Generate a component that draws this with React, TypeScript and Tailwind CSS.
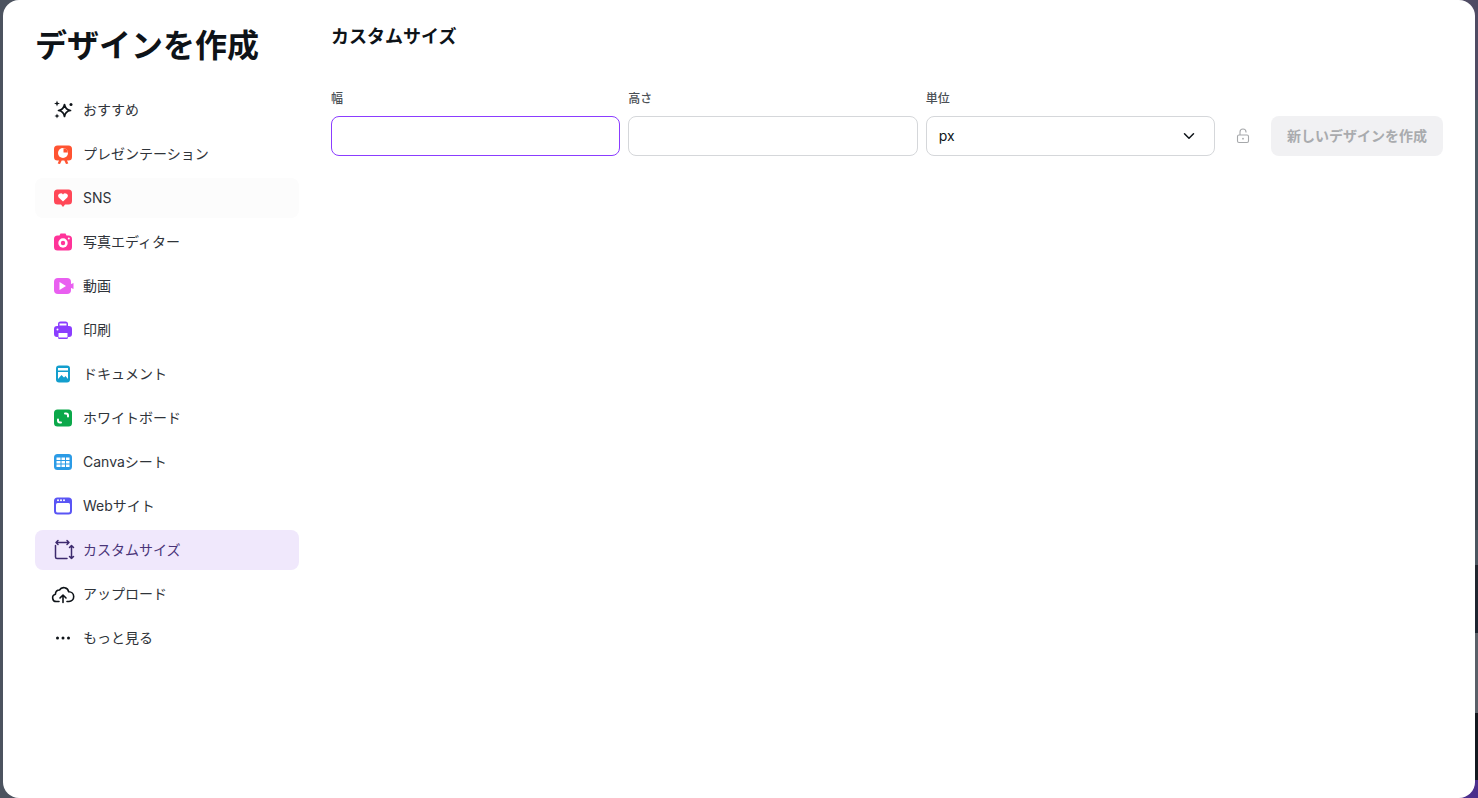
import { ChevronDown } from 'lucide-react'
import type { ReactNode } from 'react'

const Sparkles = () => (
  <svg viewBox="0 0 24 24" className="size-6" fill="#0e1318">
    <path d="M13.500 6.500c.6 3.800 2 5.400 6 6-4 .6-5.400 2.200-6 6-.6-3.800-2-5.400-6-6 4-.6 5.400-2.200 6-6z" fill="none" stroke="#0e1318" strokeWidth="1.700" strokeLinejoin="round" />
    <path d="M6 2.500l.8 2.200 2.200.8-2.200.8L6 8.500l-.8-2.200-2.200-.8 2.200-.8z" />
    <path d="M6 15.500l.7 1.800 1.800.7-1.800.7-.7 1.800-.7-1.800-1.800-.7 1.800-.7z" />
    <circle cx="20" cy="6.500" r="1.500" />
  </svg>
)

const Presentation = () => (
  <svg viewBox="0 0 24 24" className="size-6">
    <path d="M6.500 3.500h11A3.500 3.500 0 0 1 21 7v8a3.500 3.500 0 0 1-3.500 3.500h-1.500l1.300 3-2.300.5-1.700-3.500h-2.600l-1.700 3.500-2.300-.5 1.300-3H6.500A3.500 3.500 0 0 1 3 15V7a3.500 3.500 0 0 1 3.500-3.500z" fill="#ff5331" />
    <circle cx="12" cy="11" r="5" fill="#fff" />
    <path d="M12.500 10.500V6.200a4.500 4.500 0 0 1 4.300 4.300z" fill="#ff5331" />
  </svg>
)

const Social = () => (
  <svg viewBox="0 0 24 24" className="size-6">
    <path d="M6.500 3.500h11A3.500 3.500 0 0 1 21 7v8a3.500 3.500 0 0 1-3.500 3.500h-3.500L12 21l-2-2.500H6.500A3.500 3.500 0 0 1 3 15V7a3.500 3.500 0 0 1 3.500-3.500z" fill="#ff4757" />
    <path d="M12 15.500l-4.300-4a2.600 2.600 0 0 1 4.300-3 2.600 2.600 0 0 1 4.300 3z" fill="#fff" />
  </svg>
)

const Camera = () => (
  <svg viewBox="0 0 24 24" className="size-6">
    <path d="M6.500 5.500h2l1-2h5l1 2h2A3.500 3.500 0 0 1 21 9v8a3.500 3.500 0 0 1-3.500 3.500h-11A3.500 3.500 0 0 1 3 17V9a3.500 3.500 0 0 1 3.500-3.500z" fill="#ff3399" />
    <circle cx="12" cy="13" r="4.700" fill="#fff" />
    <circle cx="12" cy="13" r="2.200" fill="#ff3399" />
    <circle cx="17.800" cy="8.500" r="1" fill="#fff" />
  </svg>
)

const Video = () => (
  <svg viewBox="0 0 24 24" className="size-6">
    <rect x="3" y="4" width="17" height="16" rx="4" fill="#e95ff0" />
    <path d="M19 10.500l3.500-1.500v6l-3.500-1.500z" fill="#e95ff0" />
    <path d="M8.500 8l6.500 4-6.500 4z" fill="#fff" />
  </svg>
)

const Printer = () => (
  <svg viewBox="0 0 24 24" className="size-6">
    <path d="M7 8V6a2.500 2.500 0 0 1 2.500-2.500h5A2.500 2.500 0 0 1 17 6v2h1a3 3 0 0 1 3 3v5a3 3 0 0 1-3 3h-1v.500a1.500 1.500 0 0 1-1.500 1.500h-7A1.500 1.500 0 0 1 7 19.500V19H6a3 3 0 0 1-3-3v-5a3 3 0 0 1 3-3z" fill="#8b3dff" />
    <rect x="8.500" y="5.500" width="7" height="2" fill="#fff" />
    <rect x="7.500" y="15" width="9" height="4.500" rx=".5" fill="#fff" />
    <circle cx="6.500" cy="11.500" r="1" fill="#fff" />
  </svg>
)

const Doc = () => (
  <svg viewBox="0 0 24 24" className="size-6">
    <rect x="5" y="3.500" width="14" height="17" rx="3" fill="#139ecd" />
    <rect x="7" y="6" width="10" height="2.500" fill="#fff" />
    <rect x="7" y="10" width="10" height="7" fill="#fff" />
    <path d="M7 17l3.500-4 2.500 2.500 1.500-1.500 2.500 3z" fill="#139ecd" />
  </svg>
)

const Whiteboard = () => (
  <svg viewBox="0 0 24 24" className="size-6">
    <rect x="3" y="3.500" width="18" height="17" rx="3.500" fill="#0ba84a" />
    <path d="M14 7.500h1a2 2 0 0 1 2 2v1M10 16.500H9a2 2 0 0 1-2-2v-1" fill="none" stroke="#fff" strokeWidth="2" strokeLinecap="round" />
  </svg>
)

const Sheet = () => (
  <svg viewBox="0 0 24 24" className="size-6">
    <rect x="3" y="4" width="18" height="16" rx="3.500" fill="#2b9be6" />
    <rect x="5.500" y="7.500" width="13" height="2.500" fill="#fff" />
    <rect x="5.500" y="11" width="13" height="2.500" fill="#fff" />
    <rect x="5.500" y="14.500" width="13" height="2.500" fill="#fff" />
    <path d="M10 7v10.500M14.500 7v10.500" stroke="#2b9be6" strokeWidth="1" />
  </svg>
)

const Website = () => (
  <svg viewBox="0 0 24 24" className="size-6">
    <rect x="3" y="3.500" width="18" height="17" rx="3.500" fill="#5a55f5" />
    <rect x="5" y="9" width="14" height="9.500" rx="1.500" fill="#fff" />
    <circle cx="7" cy="6.300" r="1" fill="#fff" />
    <circle cx="10" cy="6.300" r="1" fill="#fff" />
    <circle cx="13" cy="6.300" r="1" fill="#fff" />
  </svg>
)

const CustomSize = () => (
  <svg viewBox="0 0 24 24" className="size-6" fill="none" stroke="#3d2a6e" strokeWidth="1.500" strokeLinecap="round" strokeLinejoin="round">
    <path d="M4.500 7.500V19A1.500 1.500 0 0 0 6 20.500h10" />
    <path d="M5 4.500h13M7 2.500l-2 2 2 2M16 2.500l2 2-2 2" />
    <path d="M20.500 7.500v13M18.500 9.500l2-2 2 2M18.500 18.500l2 2 2-2" />
  </svg>
)

const Upload = () => (
  <svg viewBox="0 0 24 24" className="size-6" fill="none" stroke="#0e1318" strokeWidth="1.600" strokeLinecap="round" strokeLinejoin="round">
    <path d="M8 19.500H5.500a3.700 3.700 0 0 1-1-7.300 3.800 3.800 0 0 1 4-4.200 5 5 0 0 1 9.200 1.800 4.800 4.800 0 0 1 .3 9.700h-2" />
    <path d="M12 20.500v-7M9 16l3-3 3 3" />
  </svg>
)

const Dots = () => (
  <svg viewBox="0 0 24 24" className="size-6" fill="#0e1318">
    <circle cx="6.500" cy="12" r="1.500" />
    <circle cx="12" cy="12" r="1.500" />
    <circle cx="17.500" cy="12" r="1.500" />
  </svg>
)

const navItems: { label: string; icon: ReactNode; state?: 'hover' | 'active' }[] = [
  { label: 'おすすめ', icon: <Sparkles /> },
  { label: 'プレゼンテーション', icon: <Presentation /> },
  { label: 'SNS', icon: <Social />, state: 'hover' },
  { label: '写真エディター', icon: <Camera /> },
  { label: '動画', icon: <Video /> },
  { label: '印刷', icon: <Printer /> },
  { label: 'ドキュメント', icon: <Doc /> },
  { label: 'ホワイトボード', icon: <Whiteboard /> },
  { label: 'Canvaシート', icon: <Sheet /> },
  { label: 'Webサイト', icon: <Website /> },
  { label: 'カスタムサイズ', icon: <CustomSize />, state: 'active' },
  { label: 'アップロード', icon: <Upload /> },
  { label: 'もっと見る', icon: <Dots /> },
]

function NavItem({ label, icon, state }: { label: string; icon: ReactNode; state?: 'hover' | 'active' }) {
  const tone =
    state === 'active'
      ? 'bg-[#f0e8fc] text-[#4a3579]'
      : state === 'hover'
        ? 'bg-[#fcfcfc] text-[#2f343a]'
        : 'text-[#2f343a]'
  return (
    <div className={`flex h-10 items-center gap-2 rounded-lg px-4 text-sm ${tone}`}>
      {icon}
      <span>{label}</span>
    </div>
  )
}

function Field({ label, children }: { label: string; children: ReactNode }) {
  return (
    <div className="flex w-[289.33px] flex-col gap-2">
      <span className="text-xs leading-[18px] font-medium text-[#4a4f54]">{label}</span>
      {children}
    </div>
  )
}

export default function App() {
  return (
    <div className="h-screen overflow-hidden bg-[#4c535f] bg-[linear-gradient(to_bottom,#4f4b63_0,#4f4b63_100px,#4d5963_100px,#4d5963_450px,#3f4650_450px,#3f4650_530px,#4c5660_530px,#4c5660_565px,#22262f_565px,#1e2430_633px,#5a6068_633px,#5a6068_713px,#14181f_713px,#14181f_780px,#4b2f8c_780px)] bg-[length:20px_100%] bg-right bg-no-repeat px-[3px] font-['Inter','Noto_Sans_CJK_JP',sans-serif]">
      <div className="flex h-full rounded-2xl bg-white text-[#0e1318]">
        <aside className="w-[328px] shrink-0 pt-6 px-8">
          <h1 className="mb-[22px] text-[32px] leading-[44px] font-bold">デザインを作成</h1>
          <nav className="flex flex-col gap-1">
            {navItems.map((item) => (
              <NavItem key={item.label} {...item} />
            ))}
          </nav>
        </aside>

        <main className="flex-1 pt-[25px] pr-8">
          <h2 className="mb-[41px] text-lg leading-6 font-bold">カスタムサイズ</h2>
          <div className="flex items-end gap-2">
            <Field label="幅">
              <input className="h-10 rounded-lg border border-[#8b3dff] px-3 outline-none" />
            </Field>
            <Field label="高さ">
              <input className="h-10 rounded-lg border border-[#d5d7da] px-3 outline-none" />
            </Field>
            <Field label="単位">
              <div className="flex h-10 items-center justify-between rounded-lg border border-[#d5d7da] pr-4 pl-3 text-sm">
                <span>px</span>
                <ChevronDown size={18} strokeWidth={2} />
              </div>
            </Field>
            <div className="flex h-10 w-10 items-center justify-center text-[#a6a8ab]">
              <svg viewBox="0 0 16 16" className="size-4" fill="none" stroke="currentColor" strokeWidth="1.100">
                <rect x="2.500" y="7" width="11" height="7.500" rx="1.500" />
                <path d="M5 7V4a3 3 0 0 1 6 0v.5" />
                <circle cx="8" cy="10.700" r=".9" fill="currentColor" stroke="none" />
              </svg>
            </div>
            <button className="h-10 w-[172px] rounded-lg bg-[#f1f1f3] text-sm font-semibold text-[#a9abae]">
              新しいデザインを作成
            </button>
          </div>
        </main>
      </div>
    </div>
  )
}
